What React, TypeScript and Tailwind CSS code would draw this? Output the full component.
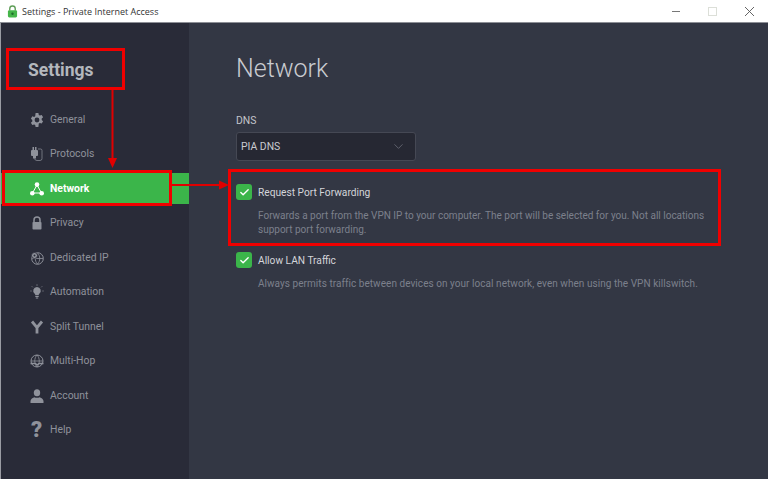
import React from 'react';
import { Check, ChevronDown } from 'lucide-react';

const GeneralIcon = () => (
  <svg viewBox="0 0 14 14" className="w-[14px] h-[14px]" fill="currentColor">
    <path fillRule="evenodd" d="M5.6 0h2.8l.4 1.9 1.1.6 1.8-.6 1.4 2.4-1.4 1.3v1.3l1.4 1.3-1.4 2.4-1.8-.6-1.1.6L8.4 14H5.6l-.4-1.9-1.1-.6-1.8.6-1.4-2.4 1.4-1.3V7.1L.9 5.7l1.4-2.4 1.8.6 1.1-.6L5.6 0ZM7 4.6a2.4 2.4 0 1 0 0 4.8 2.4 2.4 0 0 0 0-4.8Z" />
  </svg>
);

const ProtocolsIcon = () => (
  <svg viewBox="0 0 14 16" className="w-[14px] h-[16px]" fill="none">
    <rect x="1" y="4" width="7" height="6" rx="1" fill="currentColor" />
    <rect x="2.500" y="1" width="1.500" height="3" fill="currentColor" />
    <rect x="5" y="1" width="1.500" height="3" fill="currentColor" />
    <rect x="3" y="10" width="3" height="2.500" fill="currentColor" />
    <path d="M8 3h2.500a1.500 1.500 0 0 1 1.500 1.500v8a2 2 0 0 1-2 2H7a2.500 2.500 0 0 1-2.500-2" stroke="currentColor" strokeWidth="0.700" />
  </svg>
);

const NetworkIcon = () => (
  <svg viewBox="0 0 14 14" className="w-[14px] h-[14px]" fill="currentColor" stroke="currentColor">
    <path d="M7 3 2.500 11h9L7 3Z" fill="none" strokeWidth="1" />
    <circle cx="7" cy="2.600" r="2.300" stroke="none" />
    <circle cx="2.300" cy="11.300" r="2.300" stroke="none" />
    <circle cx="11.700" cy="11.300" r="2.300" stroke="none" />
  </svg>
);

const PrivacyIcon = () => (
  <svg viewBox="0 0 12 14" className="w-[12px] h-[14px]">
    <path d="M3 6V4a3 3 0 0 1 6 0v2" fill="none" stroke="currentColor" strokeWidth="1.500" />
    <rect x="1.500" y="6" width="9" height="7.500" rx="0.800" fill="currentColor" />
  </svg>
);

const DedicatedIcon = () => (
  <svg viewBox="0 0 14 14" className="w-[14px] h-[14px]" fill="none" stroke="currentColor">
    <circle cx="7.500" cy="7.500" r="5.800" strokeWidth="1" />
    <path d="M2 7.500h11M7.500 2c-3 3-3 8 0 11M7.500 2c3 3 3 8 0 11" strokeWidth="0.800" />
    <circle cx="4.500" cy="4.500" r="3" fill="currentColor" stroke="#292b38" strokeWidth="0.800" />
    <circle cx="4.500" cy="4.500" r="1" fill="#292b38" stroke="none" />
  </svg>
);

const AutomationIcon = () => (
  <svg viewBox="0 0 14 16" className="w-[14px] h-[16px]" fill="currentColor">
    <path d="M7 3a3.800 3.800 0 0 0-2.300 6.800c.5.400.6 1 .6 1.500h3.400c0-.5.1-1.100.6-1.500A3.800 3.800 0 0 0 7 3Z" />
    <rect x="5.300" y="12" width="3.400" height="1" />
    <rect x="5.800" y="13.500" width="2.400" height="1" />
    <path d="M7 .3v1.500M1.800 2.300l1 1M12.200 2.300l-1 1M.3 7h1.400M12.300 7h1.400" stroke="currentColor" strokeWidth="0.700" fill="none" />
  </svg>
);

const SplitIcon = () => (
  <svg viewBox="0 0 14 14" className="w-[14px] h-[14px]" fill="none" stroke="currentColor">
    <path d="M7 13.500V7.500L2 1.500M7 7.500l5-6" strokeWidth="2.800" />
  </svg>
);

const MultiHopIcon = () => (
  <svg viewBox="0 0 14 14" className="w-[14px] h-[14px]" fill="none" stroke="currentColor">
    <circle cx="7" cy="7" r="6" strokeWidth="1" />
    <path d="M1 7h12M7 1c-3 3-3 9 0 12M7 1c3 3 3 9 0 12" strokeWidth="0.800" />
    <path d="M.5 9.500h5l1.500 1.500 2-1.500h4.500" strokeWidth="1.400" />
  </svg>
);

const AccountIcon = () => (
  <svg viewBox="0 0 14 14" className="w-[14px] h-[14px]" fill="currentColor">
    <ellipse cx="7" cy="3.800" rx="3.200" ry="3.500" />
    <path d="M0.500 14v-2c0-2 2.500-3.300 4-3.800.8.700 4.200.7 5 0 1.500.5 4 1.800 4 3.800v2H.5Z" />
  </svg>
);

const sidebarItems = [
  { label: 'General', icon: <GeneralIcon /> },
  { label: 'Protocols', icon: <ProtocolsIcon /> },
  { label: 'Network', icon: <NetworkIcon />, active: true },
  { label: 'Privacy', icon: <PrivacyIcon /> },
  { label: 'Dedicated IP', icon: <DedicatedIcon /> },
  { label: 'Automation', icon: <AutomationIcon /> },
  { label: 'Split Tunnel', icon: <SplitIcon /> },
  { label: 'Multi-Hop', icon: <MultiHopIcon /> },
  { label: 'Account', icon: <AccountIcon /> },
  { label: 'Help', icon: <span className="text-[22px] font-black leading-none">?</span> },
];

const CheckBox = () => (
  <div className="w-4 h-4 rounded-[3px] bg-[#3bb54a] flex items-center justify-center shrink-0">
    <Check className="w-[11px] h-[11px] text-white" strokeWidth={3} />
  </div>
);

const ToggleRow = ({ label, description }: { label: string; description: React.ReactNode }) => (
  <div>
    <div className="flex items-center gap-[6px] h-4">
      <CheckBox />
      <span className="pt-px text-[10.200px] text-[#d3d5da]">{label}</span>
    </div>
    <p className="ml-[22px] mt-[9px] text-[10px] leading-[14px] text-[#7c808c]">{description}</p>
  </div>
);

export default function App() {
  return (
    <div className="relative w-[768px] h-[479px] overflow-hidden bg-[#333744] flex flex-col font-['Roboto',sans-serif]">
      <header className="h-[23px] shrink-0 bg-white flex items-center pl-[7px] border-b border-[#8d8f96]">
        <svg viewBox="0 0 12 14" className="w-[11px] h-[13px]">
          <path d="M3 6V4a3 3 0 0 1 6 0v2" fill="none" stroke="#5f9e58" strokeWidth="1.500" />
          <rect x="1" y="5.500" width="10" height="8" rx="1.500" fill="#45b549" />
          <circle cx="6" cy="9.500" r="1.300" fill="#1f6b2a" />
        </svg>
        <span className="ml-[4px] pt-px text-[9px] text-[#333] font-['Open_Sans',sans-serif]">Settings - Private Internet Access</span>
        <div className="ml-auto flex items-center">
          <div className="w-[8px] h-px bg-[#777] mr-[28px]" />
          <div className="w-[9px] h-[9px] border border-[#dcdfd8] mr-[28px]" />
          <svg viewBox="0 0 9 9" className="w-[9px] h-[9px] mr-[14px]" fill="none" stroke="#555" strokeWidth="0.900">
            <path d="M0 0 9 9M9 0 0 9" />
          </svg>
        </div>
      </header>

      <div className="flex-1 flex min-h-0">
        <aside className="w-[189px] shrink-0 bg-[#292b38] border-l border-[#9a9ca3]">
          <h2 className="pl-[27px] pt-[35px] text-[17.500px] leading-[24px] font-bold text-[#b4b7bd]">Settings</h2>
          <nav className="mt-[22px] flex flex-col gap-[3.500px]">
            {sidebarItems.map((item) => (
              <div
                key={item.label}
                className={`h-[31px] flex items-center pl-[28px] text-[10.400px] ${
                  item.active ? 'bg-[#3bb54a] text-white font-bold' : 'text-[#8f929b]'
                }`}
              >
                <span className="w-[15px] flex justify-center">{item.icon}</span>
                <span className="ml-[6px]">{item.label}</span>
              </div>
            ))}
          </nav>
        </aside>

        <main className="flex-1 pl-[47px] pt-[29px]">
          <h1 className="text-[25px] leading-[34px] font-light text-[#c9cbd0]">Network</h1>
          <div className="mt-[28px] text-[10.400px] leading-[14px] text-[#c3c5cb]">DNS</div>
          <div className="mt-[4px] w-[180px] h-[29px] rounded-[3px] border border-[#454854] bg-[#262833] flex items-center justify-between pl-[4px] pr-[9px]">
            <span className="text-[10.400px] text-[#c9cbd0]">PIA DNS</span>
            <ChevronDown className="w-[15px] h-[15px] text-[#6d707b]" strokeWidth={1.250} />
          </div>
          <div className="mt-[23px] flex flex-col gap-[15px]">
            <ToggleRow
              label="Request Port Forwarding"
              description={
                <>
                  Forwards a port from the VPN IP to your computer. The port will be selected for you. Not all locations
                  <br />
                  support port forwarding.
                </>
              }
            />
            <ToggleRow
              label="Allow LAN Traffic"
              description={
                <span className="tracking-[0.005em]">
                  Always permits traffic between devices on your local network, even when using the VPN killswitch.
                </span>
              }
            />
          </div>
        </main>
      </div>

      {/* red annotations drawn over the screenshot */}
      <div className="absolute left-[6px] top-[48px] w-[119px] h-[42px] border-[3px] border-[#f00000]" />
      <div className="absolute left-[2px] top-[170px] w-[170px] h-[36px] border-[3px] border-[#f00000]" />
      <div className="absolute left-[228px] top-[169px] w-[493px] h-[77px] border-[3px] border-[#f00000]" />
      <svg className="absolute left-0 top-0 w-[768px] h-[479px] pointer-events-none" viewBox="0 0 768 479">
        <path d="M112.500 90V160" stroke="#e00000" strokeWidth="2" />
        <path d="M108 158h9l-4.500 10Z" fill="#e00000" />
        <path d="M172 185H222" stroke="#e00000" strokeWidth="2" />
        <path d="M219 180.500V189.500L229 185Z" fill="#e00000" />
      </svg>
    </div>
  );
}
